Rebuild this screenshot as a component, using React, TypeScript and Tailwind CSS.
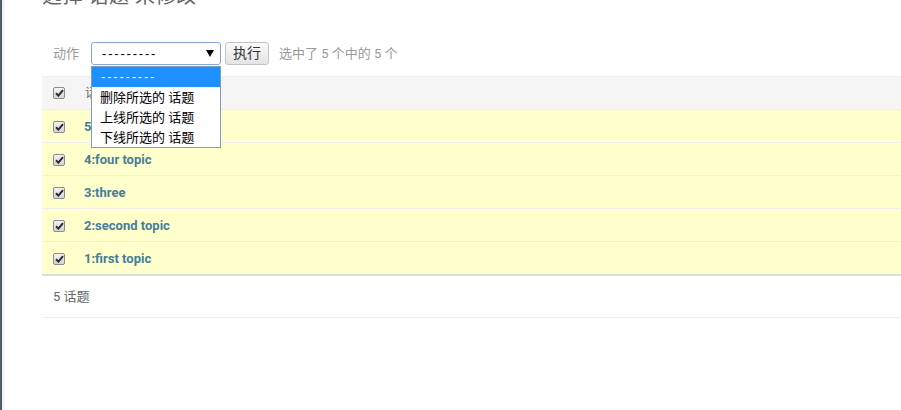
import * as React from 'react';

const font = "font-['Roboto','Noto_Sans_CJK_SC',sans-serif]";

const rows = ['5:five topic', '4:four topic', '3:three', '2:second topic', '1:first topic'];
const options = ['删除所选的 话题', '上线所选的 话题', '下线所选的 话题'];

const Check = () => (
  <span className="flex h-[12px] w-[12px] items-center justify-center rounded-[2px] border border-[#8c8c8c] bg-gradient-to-b from-[#f2f2f2] to-[#d4d4d4]">
    <svg width="9" height="8" viewBox="0 0 9 8">
      <path d="M1 4.2 L3.4 6.6 L8 1.2" fill="none" stroke="#2b2b2b" strokeWidth="2" />
    </svg>
  </span>
);

export default function App() {
  return (
    <div className={`${font} relative h-[410px] w-[901px] overflow-hidden border-l-2 border-[#525b69] bg-white shadow-[inset_4px_0_4px_-3px_rgba(0,0,0,0.12)]`}>
      <div className="pl-[40px]">
        <h1 className="-mt-[17px] text-[20px] leading-[26px] tracking-[0.5px] text-[#666]">选择 话题 来修改</h1>

        <div className="mt-[33px] flex h-[23px] items-center pl-[11px] text-[13px] text-[#999]">
          <span>动作</span>
          <div className="relative ml-[12px]">
            <div className="flex h-[23px] w-[130px] items-center justify-between rounded-[3px] border border-[#84a3dc] bg-white pl-[10px] pr-[6px]">
              <span className="font-['Liberation_Sans',sans-serif] text-[13px] tracking-[1.8px] text-black">---------</span>
              <span className="h-0 w-0 border-x-[4px] border-t-[7px] border-x-transparent border-t-black" />
            </div>
            <div className="absolute left-0 top-[24px] z-10 w-[130px] border border-[#7f9db9] bg-white text-[13px] text-black">
              <div className="flex h-[20px] items-center bg-[#1e90ff] pl-[9px] font-['Liberation_Sans',sans-serif] tracking-[1.8px] text-white">---------</div>
              {options.map((o) => (
                <div key={o} className="flex h-[20px] items-center pl-[8px] leading-none">{o}</div>
              ))}
            </div>
          </div>
          <button className="ml-[4px] h-[23px] w-[44px] rounded-[3px] border border-[#c4c4c4] bg-gradient-to-b from-[#fbfbfb] to-[#e4e4e4] text-[14px] text-[#333]">执行</button>
          <span className="ml-[10px]">选中了 5 个中的 5 个</span>
        </div>

        <div className="mt-[11px] border-t border-[#eee]">
          <div className="flex h-[32px] items-center bg-[#f5f5f5] pl-[11px] text-[13px] text-[#666]">
            <Check />
            <span className="ml-[20px]">话题</span>
          </div>
          {rows.map((r) => (
            <div key={r} className="flex h-[33px] items-center border-t border-[#eee] bg-[#ffc] pl-[11px] pt-[1px]">
              <Check />
              <span className="ml-[19px] text-[13px] font-bold text-[#447e9b]">{r}</span>
            </div>
          ))}
          <div className="border-t-2 border-[#ddd]" />
          <div className="flex h-[42px] items-center border-b border-[#eee] pl-[11px] pt-[1px] text-[13px] text-[#666]">5 话题</div>
        </div>
      </div>
    </div>
  );
}
